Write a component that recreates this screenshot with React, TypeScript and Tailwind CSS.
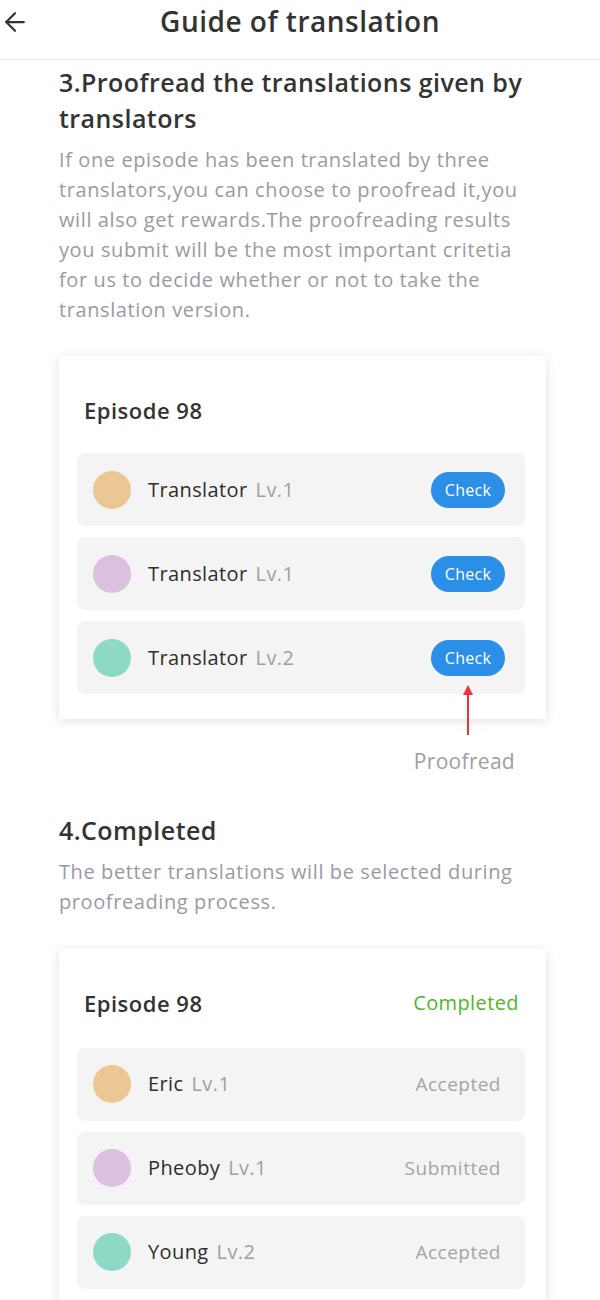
import { ArrowLeft } from "lucide-react";

type Row = { name: string; lv: string; color: string; status?: string };

const proofRows: Row[] = [
  { name: "Translator", lv: "Lv.1", color: "bg-[#ebc793]" },
  { name: "Translator", lv: "Lv.1", color: "bg-[#dcc0df]" },
  { name: "Translator", lv: "Lv.2", color: "bg-[#8ed8c6]" },
];

const doneRows: Row[] = [
  { name: "Eric", lv: "Lv.1", color: "bg-[#ebc793]", status: "Accepted" },
  { name: "Pheoby", lv: "Lv.1", color: "bg-[#dcc0df]", status: "Submitted" },
  { name: "Young", lv: "Lv.2", color: "bg-[#8ed8c6]", status: "Accepted" },
];

function RowItem({ row, last }: { row: Row; last?: boolean }) {
  return (
    <div className="relative flex h-[73px] items-center rounded-lg bg-[#f4f4f4] pl-4 pr-5">
      <div className={`h-[38px] w-[38px] shrink-0 rounded-full ${row.color}`} />
      <div className="ml-[17px] flex-1 text-[20px] tracking-[0.4px]">
        <span className="text-[#2e2e2e]">{row.name}</span>
        <span className="ml-2 text-[#a0a0a0]">{row.lv}</span>
      </div>
      {row.status ? (
        <span className="pr-1 text-[19px] tracking-[0.5px] text-[#a5a5a5]">{row.status}</span>
      ) : (
        <button className="flex h-9 w-[74px] items-center justify-center rounded-full bg-[#2b8fe8] text-[16px] tracking-[0.3px] text-white">
          Check
        </button>
      )}
      {last && !row.status && (
        <div className="absolute right-[52px] top-[64px] flex flex-col items-center">
          <div className="h-0 w-0 border-x-[5px] border-b-[10px] border-x-transparent border-b-[#f0303f]" />
          <div className="h-[40px] w-[2px] bg-[#f0303f]" />
        </div>
      )}
    </div>
  );
}

export default function App() {
  return (
    <div className="min-h-[1300px] bg-white font-['Open_Sans','Liberation_Sans',sans-serif] text-[#333]">
      <header className="relative flex h-[60px] justify-center border-b border-[#ececec] pt-[2px]">
        <ArrowLeft className="absolute left-0 top-[7px] h-[30px] w-[30px] text-[#333]" strokeWidth={1.8} />
        <h1 className="text-[28px] font-semibold leading-[38px] tracking-[0.5px] text-[#333]">Guide of translation</h1>
      </header>

      <section className="px-[59px]">
        <h2 className="mt-[4px] text-[25px] font-semibold leading-[36px] tracking-[0.45px]">
          3.Proofread the translations given by translators
        </h2>
        <p className="mt-[9px] pr-[14px] text-[20px] leading-[30px] tracking-[0.6px] text-[#9a9aa3]">
          If one episode has been translated by three translators,you can choose to proofread it,you will also get
          rewards.The proofreading results you submit will be the most important critetia for us to decide whether or
          not to take the translation version.
        </p>

        <div className="mt-[31px] mr-[-5px] bg-white pb-[25px] pt-[38px] shadow-[0_2px_10px_rgba(0,0,0,0.12)]">
          <div className="px-[25px] text-[22px] font-semibold tracking-[0.5px]">Episode 98</div>
          <div className="mt-[26px] flex flex-col gap-[11px] pl-[18px] pr-[21px]">
            {proofRows.map((r, i) => (
              <RowItem key={i} row={r} last={i === proofRows.length - 1} />
            ))}
          </div>
        </div>
        <div className="mt-[27px] flex justify-end pr-[26px] text-[21px] tracking-[0.3px] text-[#a0a0a0]">
          Proofread
        </div>

        <h2 className="mt-[34px] text-[25px] font-semibold leading-[36px] tracking-[0.45px]">4.Completed</h2>
        <p className="mt-[9px] pr-[14px] text-[20px] leading-[30px] tracking-[0.6px] text-[#9a9aa3]">
          The better translations will be selected during proofreading process.
        </p>

        <div className="mt-[32px] mr-[-5px] bg-white pb-[25px] pt-[38px] shadow-[0_2px_10px_rgba(0,0,0,0.12)]">
          <div className="flex items-center justify-between pl-[25px] pr-[27px]">
            <span className="text-[22px] font-semibold tracking-[0.5px]">Episode 98</span>
            <span className="text-[20px] tracking-[0.4px] text-[#52b52a]">Completed</span>
          </div>
          <div className="mt-[28px] flex flex-col gap-[11px] pl-[18px] pr-[21px]">
            {doneRows.map((r, i) => (
              <RowItem key={i} row={r} />
            ))}
          </div>
        </div>
      </section>
    </div>
  );
}
